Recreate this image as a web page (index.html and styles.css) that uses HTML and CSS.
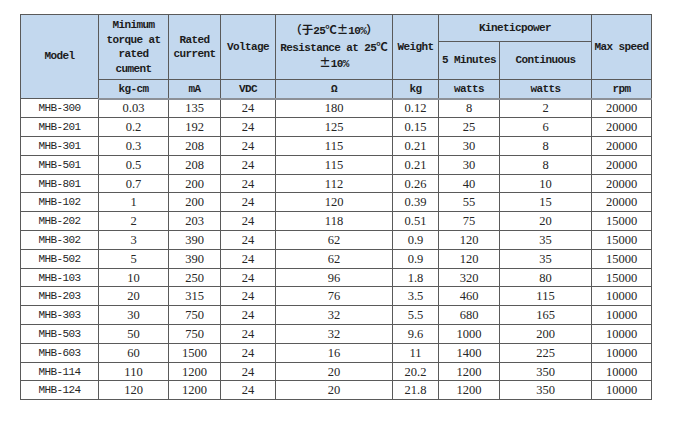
FILE: index.html
```html
<!DOCTYPE html>
<html>
<head>
<meta charset="utf-8">
<link rel="stylesheet" href="styles.css">
</head>
<body>
<table class="spec">
  <colgroup>
    <col class="c-model"><col class="c-torque"><col class="c-current"><col class="c-volt"><col class="c-res"><col class="c-weight"><col class="c-min"><col class="c-cont"><col class="c-speed">
  </colgroup>
  <thead>
    <tr class="h1">
      <th rowspan="3">Model</th>
      <th rowspan="2">Minimum<br>torque at<br>rated<br>cument</th>
      <th rowspan="2">Rated<br>current</th>
      <th rowspan="2">Voltage</th>
      <th rowspan="2"><span class="cjk">（于</span>25<span class="cjk">℃±</span>10%<span class="cjk">）</span><br>Resistance at 25<span class="cjk">℃</span><br><span class="cjk">±</span>10%</th>
      <th rowspan="2">Weight</th>
      <th colspan="2">Kineticpower</th>
      <th rowspan="2">Max speed</th>
    </tr>
    <tr class="h2">
      <th>5 Minutes</th>
      <th>Continuous</th>
    </tr>
    <tr class="units">
      <th>kg-cm</th>
      <th>mA</th>
      <th>VDC</th>
      <th class="omega">Ω</th>
      <th>kg</th>
      <th>watts</th>
      <th>watts</th>
      <th>rpm</th>
    </tr>
  </thead>
  <tbody>
    <tr><td class="m">MHB-300</td><td>0.03</td><td>135</td><td>24</td><td>180</td><td>0.12</td><td>8</td><td>2</td><td>20000</td></tr>
    <tr><td class="m">MHB-201</td><td>0.2</td><td>192</td><td>24</td><td>125</td><td>0.15</td><td>25</td><td>6</td><td>20000</td></tr>
    <tr><td class="m">MHB-301</td><td>0.3</td><td>208</td><td>24</td><td>115</td><td>0.21</td><td>30</td><td>8</td><td>20000</td></tr>
    <tr><td class="m">MHB-501</td><td>0.5</td><td>208</td><td>24</td><td>115</td><td>0.21</td><td>30</td><td>8</td><td>20000</td></tr>
    <tr><td class="m">MHB-801</td><td>0.7</td><td>200</td><td>24</td><td>112</td><td>0.26</td><td>40</td><td>10</td><td>20000</td></tr>
    <tr><td class="m">MHB-102</td><td>1</td><td>200</td><td>24</td><td>120</td><td>0.39</td><td>55</td><td>15</td><td>20000</td></tr>
    <tr><td class="m">MHB-202</td><td>2</td><td>203</td><td>24</td><td>118</td><td>0.51</td><td>75</td><td>20</td><td>15000</td></tr>
    <tr><td class="m">MHB-302</td><td>3</td><td>390</td><td>24</td><td>62</td><td>0.9</td><td>120</td><td>35</td><td>15000</td></tr>
    <tr><td class="m">MHB-502</td><td>5</td><td>390</td><td>24</td><td>62</td><td>0.9</td><td>120</td><td>35</td><td>15000</td></tr>
    <tr><td class="m">MHB-103</td><td>10</td><td>250</td><td>24</td><td>96</td><td>1.8</td><td>320</td><td>80</td><td>15000</td></tr>
    <tr><td class="m">MHB-203</td><td>20</td><td>315</td><td>24</td><td>76</td><td>3.5</td><td>460</td><td>115</td><td>10000</td></tr>
    <tr><td class="m">MHB-303</td><td>30</td><td>750</td><td>24</td><td>32</td><td>5.5</td><td>680</td><td>165</td><td>10000</td></tr>
    <tr><td class="m">MHB-503</td><td>50</td><td>750</td><td>24</td><td>32</td><td>9.6</td><td>1000</td><td>200</td><td>10000</td></tr>
    <tr><td class="m">MHB-603</td><td>60</td><td>1500</td><td>24</td><td>16</td><td>11</td><td>1400</td><td>225</td><td>10000</td></tr>
    <tr><td class="m">MHB-114</td><td>110</td><td>1200</td><td>24</td><td>20</td><td>20.2</td><td>1200</td><td>350</td><td>10000</td></tr>
    <tr><td class="m">MHB-124</td><td>120</td><td>1200</td><td>24</td><td>20</td><td>21.8</td><td>1200</td><td>350</td><td>10000</td></tr>
  </tbody>
</table>
</body>
</html>
```

FILE: styles.css
```css
html, body {
  margin: 0;
  padding: 0;
  background: #ffffff;
}

.spec {
  border-collapse: collapse;
  table-layout: fixed;
  width: 631px;
  margin: 14px 0 0 20px;
  color: #1c1c1c;
}

.c-model { width: 78px; }
.c-torque { width: 70px; }
.c-current { width: 52px; }
.c-volt { width: 55px; }
.c-res { width: 117px; }
.c-weight { width: 46px; }
.c-min { width: 61px; }
.c-cont { width: 92px; }
.c-speed { width: 60px; }

.spec th,
.spec td {
  border: 1px solid #5a5a5a;
  padding: 0;
  text-align: center;
  vertical-align: middle;
  white-space: nowrap;
}

.spec th {
  background: #c3d8ee;
  font-family: "Liberation Mono", monospace;
  font-weight: bold;
  font-size: 11px;
  letter-spacing: -0.6px;
  line-height: 14.5px;
}

.cjk {
  font-family: "Noto Sans CJK SC", sans-serif;
  font-size: 11.5px;
  font-weight: bold;
  letter-spacing: 0;
}

.h1 { height: 27px; }
.h2 { height: 38px; }

.units { height: 19px; }
.units th {
  border-bottom: 2px solid #8c9097;
}

.omega {
  font-family: "Liberation Sans", sans-serif;
  font-size: 13px;
  letter-spacing: 0;
}

.spec td {
  height: 17.8px;
  font-family: "Liberation Serif", serif;
  font-size: 12.5px;
  line-height: 14px;
  color: #262626;
}

.spec td.m {
  font-family: "Liberation Mono", monospace;
  font-size: 11px;
  letter-spacing: -0.6px;
}
```
